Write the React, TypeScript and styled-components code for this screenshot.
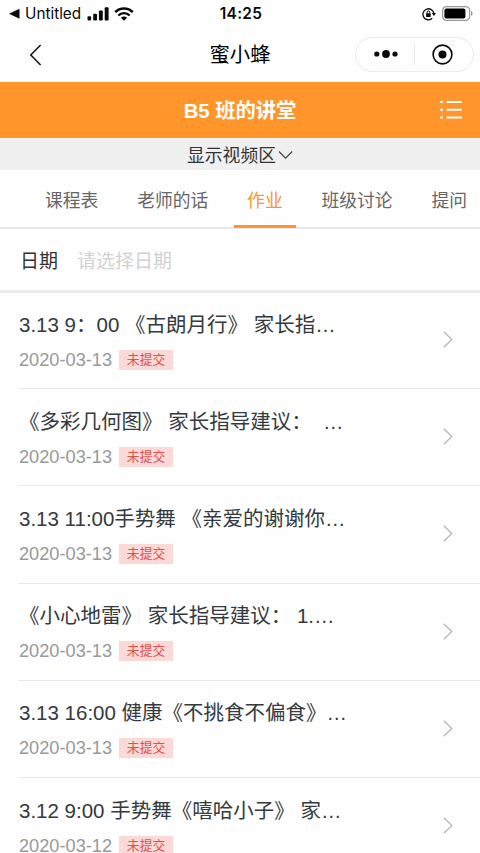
import React from "react";
import styled, { createGlobalStyle } from "styled-components";

const cjk = `"Noto Sans CJK SC", sans-serif`;

const GlobalStyle = createGlobalStyle`
  * { box-sizing: border-box; }
  html, body { margin: 0; padding: 0; overflow: hidden; }
  body { background: #fefefe; font-family: "Liberation Sans", ${cjk}; }
`;

const Screen = styled.div`
  width: 480px;
  height: 853px;
  overflow: hidden;
  display: flex;
  flex-direction: column;
  background: #fefefe;
`;

const StatusBar = styled.div`
  flex: none;
  height: 27px;
  padding: 0 7px 0 9px;
  display: grid;
  grid-template-columns: 1fr auto 1fr;
  align-items: center;
  font-family: Inter, sans-serif;
  color: #0a0a0a;
`;

const StatusLeft = styled.div`
  display: flex;
  align-items: center;
  svg { display: block; }
`;

const AppName = styled.span`
  margin: 0 6px 0 5px;
  font-size: 15.3px;
  line-height: 27px;
`;

const WifiSlot = styled.span`
  margin-left: 5px;
`;

const Clock = styled.span`
  font-size: 15.4px;
  font-weight: 600;
  letter-spacing: 0.3px;
`;

const StatusRight = styled.div`
  display: flex;
  align-items: center;
  justify-content: flex-end;
  gap: 6px;
  svg { display: block; }
`;

const NavBar = styled.header`
  flex: none;
  height: 55px;
  display: grid;
  grid-template-columns: 1fr auto 1fr;
  align-items: center;
  padding: 0 6px 0 29px;
  svg { display: block; }
`;

const NavTitle = styled.h1`
  margin: 0 0 3px;
  padding-right: 23px;
  font: 400 20.4px/30px ${cjk};
  color: #000;
`;

const Capsule = styled.div`
  justify-self: end;
  width: 119px;
  height: 35px;
  margin-bottom: 1px;
  border: 1px solid #ececec;
  border-radius: 18px;
  display: grid;
  grid-template-columns: 1fr 1fr;
  align-items: center;
`;

const CapsuleButton = styled.div<{ $divided?: boolean }>`
  height: 21px;
  display: flex;
  align-items: center;
  justify-content: center;
  padding-left: ${(p) => (p.$divided ? "3px" : "0")};
  padding-right: ${(p) => (p.$divided ? "0" : "3px")};
  border-right: ${(p) => (p.$divided ? "1px solid #ececec" : "none")};
`;

const Banner = styled.div`
  flex: none;
  height: 56px;
  padding: 2px 16px 0;
  display: grid;
  grid-template-columns: 1fr auto 1fr;
  align-items: center;
  background: #ff952b;
  color: #fff;
  svg { display: block; justify-self: end; margin-bottom: 2px; }
`;

const BannerTitle = styled.h2`
  margin: 0;
  font-size: 20.3px;
  font-weight: 700;
  line-height: 30px;
`;

const VideoToggle = styled.div`
  flex: none;
  height: 32px;
  padding-top: 3px;
  display: flex;
  align-items: center;
  justify-content: center;
  gap: 2px;
  background: #f0f0f0;
  font-size: 17.8px;
  line-height: 28px;
  color: #333;
  svg { display: block; margin-bottom: 2px; }
`;

const Tabs = styled.nav`
  flex: none;
  height: 59px;
  padding-left: 32px;
  display: flex;
  gap: 12.8px;
  border-bottom: 2px solid #e8e8e8;
`;

const Tab = styled.div<{ $active?: boolean }>`
  flex: none;
  height: 58px;
  padding: 0 13px;
  border-bottom: 3px solid ${(p) => (p.$active ? "#ff952b" : "transparent")};
  font-size: 17.8px;
  line-height: 62px;
  color: ${(p) => (p.$active ? "#f9962f" : "#666")};
`;

const DateField = styled.div`
  flex: none;
  height: 64px;
  padding: 5px 20px 0;
  display: flex;
  align-items: center;
  gap: 19px;
  border-bottom: 3px solid #ebebeb;
  font-size: 19px;
  line-height: 30px;
`;

const DateLabel = styled.span`
  color: #333;
`;

const Placeholder = styled.span`
  color: #d2d2d2;
`;

const List = styled.main`
  flex: none;
  margin-top: -1px;
  padding-left: 19px;
`;

const Row = styled.article`
  height: 97.2px;
  padding: 0 27px 1px 0;
  display: flex;
  align-items: center;
  justify-content: space-between;
  border-bottom: 1px solid #e9e9e9;
`;

const RowBody = styled.div`
  display: flex;
  flex-direction: column;
  gap: 10px;
`;

const RowTitle = styled.h3`
  margin: 0;
  font-size: 20.5px;
  font-weight: 400;
  line-height: 30px;
  white-space: pre;
  color: #343a40;
`;

const Meta = styled.div`
  display: flex;
  align-items: center;
  gap: 7px;
  height: 20px;
`;

const DateText = styled.time`
  font-size: 18.2px;
  line-height: 20px;
  color: #999;
`;

const Badge = styled.span`
  width: 54px;
  height: 20px;
  text-align: center;
  font-size: 12.8px;
  line-height: 19px;
  background: #fad9d7;
  color: #dd524d;
`;

const tabs = ["课程表", "老师的话", "作业", "班级讨论", "提问"];

const homework = [
  { title: "3.13 9：00 《古朗月行》 家长指…", date: "2020-03-13" },
  { title: "《多彩几何图》 家长指导建议：\u00a0 …", date: "2020-03-13" },
  { title: "3.13 11:00手势舞 《亲爱的谢谢你…", date: "2020-03-13" },
  { title: "《小心地雷》 家长指导建议： 1.…", date: "2020-03-13" },
  { title: "3.13 16:00 健康《不挑食不偏食》…", date: "2020-03-13" },
  { title: "3.12 9:00 手势舞《嘻哈小子》 家…", date: "2020-03-12" },
];

const Signal = () => (
  <svg width="22" height="14" viewBox="0 0 22 14" fill="#0a0a0a">
    <rect x="0.5" y="9.2" width="3.6" height="4.3" rx="1" />
    <rect x="6.2" y="6.8" width="3.8" height="6.7" rx="1" />
    <rect x="11.9" y="3.6" width="3.9" height="9.9" rx="1" />
    <rect x="17.7" y="0.3" width="3.9" height="13.2" rx="1" />
  </svg>
);

const Wifi = () => (
  <svg width="20" height="14" viewBox="0 0 20 14" fill="none" stroke="#0a0a0a" strokeWidth="2.4">
    <path d="M1.2 5.2C6 0.2 14 0.2 18.8 5.2" />
    <path d="M4.3 8.5C7.5 5.3 12.5 5.3 15.7 8.5" />
    <path d="M10 13.8L6.9 10.8C8.7 9.2 11.3 9.2 13.1 10.8Z" fill="#0a0a0a" stroke="none" />
  </svg>
);

const RotationLock = () => (
  <svg width="14" height="14" viewBox="0 0 14 14" fill="none" stroke="#0a0a0a" strokeWidth="1.3">
    <path d="M10.2 11.3A5.5 5.5 0 1 1 11.8 6" />
    <path d="M9.8 6H14L11.9 9Z" fill="#0a0a0a" stroke="none" />
    <rect x="4.1" y="6.2" width="4.6" height="3.8" rx="0.5" fill="#0a0a0a" stroke="none" />
    <path d="M5.1 6.4V5.2a1.3 1.3 0 0 1 2.6 0V6.4" strokeWidth="1" />
  </svg>
);

const Battery = () => (
  <svg width="31" height="15" viewBox="0 0 31 15">
    <rect x="0.6" y="0.6" width="27" height="13.8" rx="4" fill="none" stroke="#999" strokeWidth="1.2" />
    <rect x="2.4" y="2.4" width="21" height="10.2" rx="2" fill="#000" />
    <path d="M29 5v5c2-.8 2-4.2 0-5z" fill="#999" />
  </svg>
);

const Chevron = () => (
  <svg width="10" height="17" viewBox="0 0 10 17" fill="none" stroke="#b8b8b8" strokeWidth="1.3">
    <path d="M0.8 0.8L8.8 8.5L0.8 16.2" />
  </svg>
);

export default function App() {
  return (
    <Screen lang="zh-CN">
      <GlobalStyle />
      <StatusBar>
        <StatusLeft>
          <svg width="11" height="11" viewBox="0 0 11 11">
            <path d="M0 5.7L10.5 0.7V10.7Z" fill="#0a0a0a" />
          </svg>
          <AppName>Untitled</AppName>
          <Signal />
          <WifiSlot>
            <Wifi />
          </WifiSlot>
        </StatusLeft>
        <Clock>14:25</Clock>
        <StatusRight>
          <RotationLock />
          <Battery />
        </StatusRight>
      </StatusBar>
      <NavBar>
        <svg width="13" height="22" viewBox="0 0 13 22" fill="none" stroke="#111" strokeWidth="1.5">
          <path d="M11.6 1L1.8 11L11.6 21" />
        </svg>
        <NavTitle>蜜小蜂</NavTitle>
        <Capsule>
          <CapsuleButton $divided>
            <svg width="24" height="8" viewBox="0 0 24 8" fill="#0a0a0a">
              <circle cx="2.8" cy="4" r="2.6" />
              <circle cx="12" cy="4" r="3.9" />
              <circle cx="21" cy="4" r="2.6" />
            </svg>
          </CapsuleButton>
          <CapsuleButton>
            <svg width="21" height="21" viewBox="0 0 21 21">
              <circle cx="10.5" cy="10.5" r="9.4" fill="none" stroke="#0a0a0a" strokeWidth="1.6" />
              <circle cx="10.5" cy="10.5" r="4" fill="#0a0a0a" />
            </svg>
          </CapsuleButton>
        </Capsule>
      </NavBar>
      <Banner>
        <span />
        <BannerTitle>B5 班的讲堂</BannerTitle>
        <svg width="24" height="20" viewBox="0 0 24 20" stroke="#fff" strokeWidth="2">
          <path d="M0 2.1H3M6.5 2.1H22M0 9.8H3M6.5 9.8H22M0 17.5H3M6.5 17.5H22" />
        </svg>
      </Banner>
      <VideoToggle>
        显示视频区
        <svg width="15" height="10" viewBox="0 0 15 10" fill="none" stroke="#444" strokeWidth="1.2">
          <path d="M1 1.5L7.6 8.2L14.2 1.5" />
        </svg>
      </VideoToggle>
      <Tabs>
        {tabs.map((name) => (
          <Tab key={name} $active={name === "作业"}>
            {name}
          </Tab>
        ))}
      </Tabs>
      <DateField>
        <DateLabel>日期</DateLabel>
        <Placeholder>请选择日期</Placeholder>
      </DateField>
      <List>
        {homework.map((item) => (
          <Row key={item.title}>
            <RowBody>
              <RowTitle>{item.title}</RowTitle>
              <Meta>
                <DateText>{item.date}</DateText>
                <Badge>未提交</Badge>
              </Meta>
            </RowBody>
            <Chevron />
          </Row>
        ))}
      </List>
    </Screen>
  );
}
